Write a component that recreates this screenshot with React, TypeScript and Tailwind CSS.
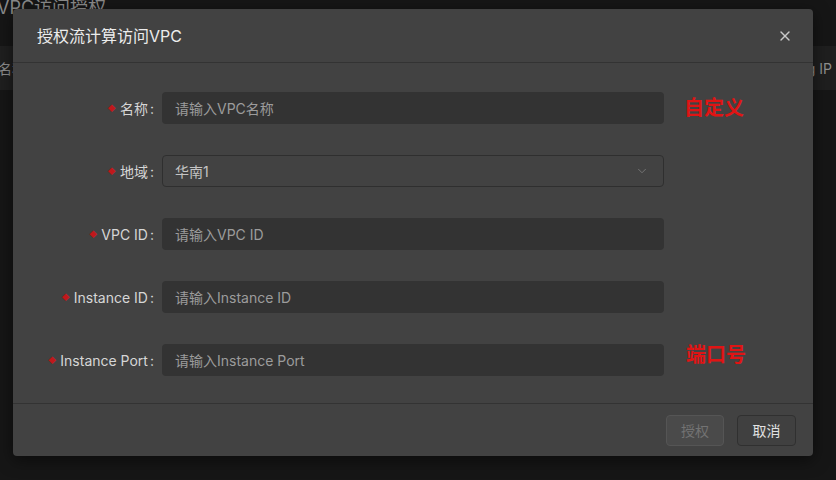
import { X, ChevronDown } from "lucide-react"

const fields = [
  { label: "名称", placeholder: "请输入VPC名称", note: "自定义" },
  { label: "地域", value: "华南1", select: true },
  { label: "VPC ID", placeholder: "请输入VPC ID" },
  { label: "Instance ID", placeholder: "请输入Instance ID" },
  { label: "Instance Port", placeholder: "请输入Instance Port", note: "端口号", noteOffset: true },
]

function Field({ f }: { f: (typeof fields)[number] }) {
  return (
    <div className="flex items-center">
      <div className="flex w-[141px] shrink-0 items-center justify-end text-[14px] text-[#d6d6d6]">
        <span className="mr-[4px] text-[8px] leading-none text-[#c0181b]">◆</span>
        <span>{f.label}</span>
        <span className="ml-[2px]">:</span>
      </div>
      <div className="ml-[8px] w-[502px] shrink-0">
        {f.select ? (
          <div className="flex h-[32px] items-center justify-between rounded-[4px] border border-[#2f2f2f] bg-[#424242] pl-[12px] pr-[14px] text-[14px] text-[#c4c4c4]">
            <span>{f.value}</span>
            <ChevronDown className="h-[14px] w-[14px] text-[#7a7a7a]" strokeWidth={1.5} />
          </div>
        ) : (
          <div className="flex h-[32px] items-center rounded-[4px] bg-[#333333] pl-[13px] text-[14px] text-[#9c9c9c]">
            {f.placeholder}
          </div>
        )}
      </div>
      {f.note && (
        <span
          className={
            f.noteOffset
              ? "ml-[22px] -mt-[10px] text-[20px] font-bold text-[#e01414]"
              : "ml-[20px] text-[20px] font-bold text-[#e01414]"
          }
        >
          {f.note}
        </span>
      )}
    </div>
  )
}

export default function App() {
  return (
    <div
      className="relative h-[480px] w-[836px] overflow-hidden bg-[#161616]"
      style={{ fontFamily: '"Inter", "Noto Sans CJK SC", sans-serif' }}
    >
      {/* page behind the modal */}
      <div className="-ml-[3px] -mt-[6px] text-[18px] text-[#8a8a8a]">VPC访问授权</div>
      <div className="mt-[25px] flex h-[44px] items-center justify-between bg-[#1f1f1f] pr-[4px] text-[14px] text-[#8f8f8f]">
        <span className="-ml-[2px]">名称</span>
        <span>Floating IP</span>
      </div>

      {/* modal */}
      <div className="absolute left-[13px] top-[9px] flex w-[800px] flex-col rounded-[4px] bg-[#424242] shadow-[0_4px_16px_rgba(0,0,0,0.5)]">
        <div className="flex h-[54px] items-center justify-between border-b border-[#333333] pl-[24px] pr-[20px]">
          <span className="text-[16px] text-[#ececec]">授权流计算访问VPC</span>
          <X className="h-[16px] w-[16px] text-[#c8c8c8]" strokeWidth={2} />
        </div>
        <div className="flex flex-col gap-[31px] pb-[27px] pt-[29px]">
          {fields.map((f) => (
            <Field key={f.label} f={f} />
          ))}
        </div>
        <div className="flex h-[53px] items-center justify-end gap-[13px] border-t border-[#333333] pr-[17px]">
          <button className="h-[31px] w-[58px] rounded-[4px] border border-[#555555] bg-[#4a4a4a] text-[14px] text-[#737373]">
            授权
          </button>
          <button className="h-[31px] w-[59px] rounded-[4px] border border-[#303030] bg-[#404040] text-[14px] text-[#e2e2e2]">
            取消
          </button>
        </div>
      </div>
    </div>
  )
}
